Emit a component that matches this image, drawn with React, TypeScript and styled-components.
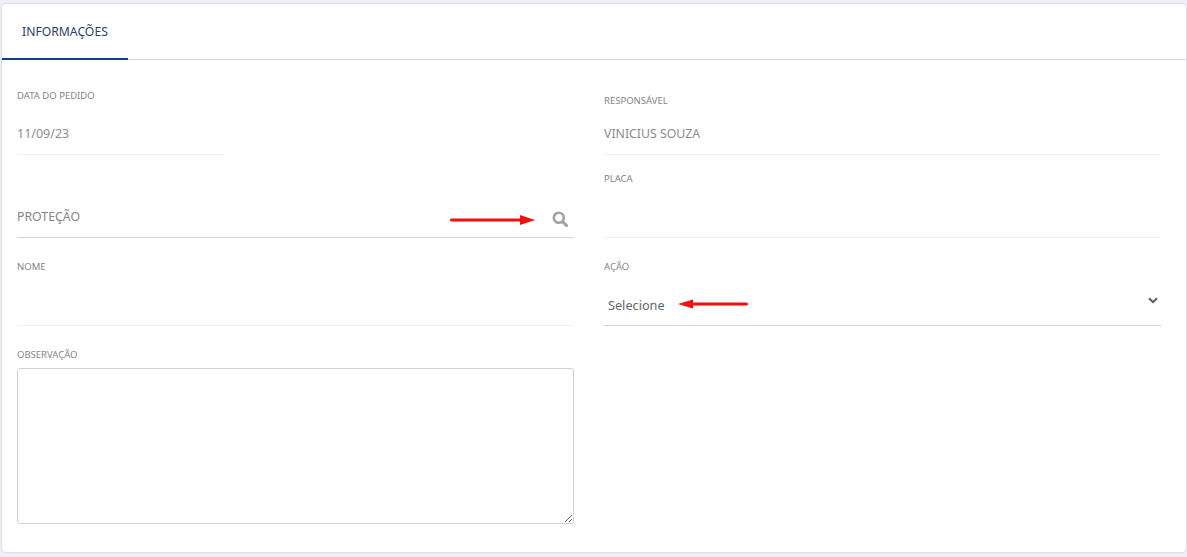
import React from 'react';
import styled, { createGlobalStyle } from 'styled-components';

const GlobalStyle = createGlobalStyle`
  html, body { margin: 0; padding: 0; background: #eeeef8; }
  body { font-family: "Noto Sans", "Open Sans", sans-serif; }
  * { box-sizing: border-box; }
`;

const Page = styled.div`
  width: 1187px;
  height: 557px;
  padding: 4px 1px 4px 2px;
`;

const Card = styled.div`
  height: 548px;
  background: #fff;
  border-radius: 4px;
  box-shadow: 0 0 0 1px #dddde4;
`;

const Tabs = styled.div`
  display: flex;
  height: 56px;
  border-bottom: 1px solid #d6d6d9;
`;

const Tab = styled.div`
  width: 126px;
  height: 56px;
  padding: 20px 0 0 20px;
  font-size: 12.2px;
  line-height: 16px;
  color: #2f3f63;
  border-bottom: 2px solid #12407f;
`;

const Columns = styled.div`
  display: grid;
  grid-template-columns: 557px 557px;
  column-gap: 30px;
  padding: 0 0 0 15px;
`;

const Column = styled.div`
  display: flex;
  flex-direction: column;
`;

const Field = styled.div<{ $height: number; $width?: number; $strong?: boolean }>`
  display: flex;
  flex-direction: column;
  height: ${p => p.$height}px;
  width: ${p => (p.$width ? `${p.$width}px` : '100%')};
  border-bottom: 1px solid ${p => (p.$strong ? '#d4d4d6' : '#f1f1f3')};
`;

const Label = styled.div<{ $top: number }>`
  margin-top: ${p => p.$top}px;
  font-size: 9.5px;
  line-height: 12px;
  color: #85858c;
  text-transform: uppercase;
`;

const Value = styled.div<{ $top: number; $size: number }>`
  margin-top: ${p => p.$top}px;
  font-size: ${p => p.$size}px;
  line-height: 16px;
  color: #8b8b90;
`;

const InputRow = styled.div<{ $top: number; $left?: number }>`
  display: flex;
  align-items: center;
  margin-top: ${p => p.$top}px;
  padding-left: ${p => p.$left || 0}px;
  height: 18px;
`;

const SearchText = styled.span`
  width: 433px;
  font-size: 12.3px;
  color: #85858a;
`;

const SelectText = styled.span`
  width: 70px;
  font-size: 12.7px;
  color: #62666d;
`;

const SearchIcon = styled.svg`
  margin-left: 16px;
  margin-top: 6px;
  flex: none;
`;

const Chevron = styled.svg`
  margin-left: auto;
  margin-right: 3px;
  margin-top: -10px;
  flex: none;
`;

const ProtectArrow = styled.svg`
  margin-top: 8px;
  flex: none;
`;

const SelectArrow = styled.svg`
  margin-bottom: 3px;
  flex: none;
`;

const NoteBlock = styled.div`
  height: 30px;
`;

const Note = styled.textarea`
  display: block;
  width: 557px;
  height: 156px;
  margin-top: 12px;
  border: 1px solid #d2d2d4;
  border-radius: 3px;
  background: #fff;
  outline: none;
  resize: both;
`;

const RightArrow = () => (
  <ProtectArrow width="86" height="10" viewBox="0 0 86 10">
    <rect x="0" y="3.5" width="72" height="3" rx="1.5" fill="#f40f0f" />
    <polygon points="70,0 85,5 70,10" fill="#f40f0f" />
  </ProtectArrow>
);

const LeftArrow = () => (
  <SelectArrow width="70" height="10" viewBox="0 0 70 10">
    <rect x="13" y="3.5" width="57" height="3" rx="1.5" fill="#f40f0f" />
    <polygon points="0,5 15,0.5 15,9.5" fill="#f40f0f" />
  </SelectArrow>
);

export default function App() {
  return (
    <>
      <GlobalStyle />
      <Page>
        <Card>
          <Tabs>
            <Tab>INFORMAÇÕES</Tab>
          </Tabs>
          <Columns>
            <Column>
              <Field $height={95} $width={207}>
                <Label $top={30}>Data do pedido</Label>
                <Value $top={24} $size={12.5}>11/09/23</Value>
              </Field>
              <Field $height={83} $strong>
                <InputRow $top={52}>
                  <SearchText>PROTEÇÃO</SearchText>
                  <RightArrow />
                  <SearchIcon width="16" height="16" viewBox="0 0 16 16">
                    <circle cx="6.8" cy="6.8" r="5" fill="none" stroke="#a2a2a4" strokeWidth="2.6" />
                    <line x1="10.6" y1="10.6" x2="14.6" y2="14.6" stroke="#a2a2a4" strokeWidth="3" strokeLinecap="round" />
                  </SearchIcon>
                </InputRow>
              </Field>
              <Field $height={88}>
                <Label $top={23}>Nome</Label>
              </Field>
              <NoteBlock>
                <Label $top={23}>Observação</Label>
              </NoteBlock>
              <Note />
            </Column>
            <Column>
              <Field $height={95}>
                <Label $top={35}>Responsável</Label>
                <Value $top={19} $size={12.3}>VINICIUS SOUZA</Value>
              </Field>
              <Field $height={83}>
                <Label $top={18}>Placa</Label>
              </Field>
              <Field $height={88} $strong>
                <Label $top={23}>Ação</Label>
                <InputRow $top={23} $left={4}>
                  <SelectText>Selecione</SelectText>
                  <LeftArrow />
                  <Chevron width="10" height="7" viewBox="0 0 10 7">
                    <path d="M1 1.2 L5 5.2 L9 1.2" fill="none" stroke="#55595f" strokeWidth="2" />
                  </Chevron>
                </InputRow>
              </Field>
            </Column>
          </Columns>
        </Card>
      </Page>
    </>
  );
}
